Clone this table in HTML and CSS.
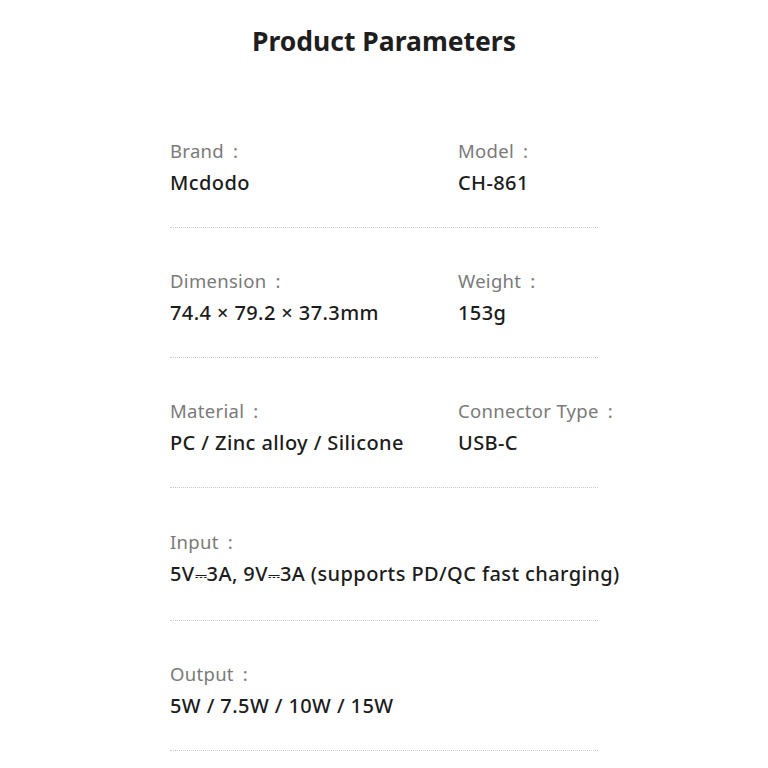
FILE: index.html
```html
<!DOCTYPE html>
<html lang="en">
<head>
<meta charset="utf-8">
<title>Product Parameters</title>
<link rel="stylesheet" href="styles.css">
</head>
<body>
<main class="page">
  <h1 class="title">Product Parameters</h1>
  <section class="params">
    <div class="row">
      <div class="cell"><div class="label">Brand<span class="colon">:</span></div><div class="value">Mcdodo</div></div>
      <div class="cell"><div class="label">Model<span class="colon">:</span></div><div class="value">CH-861</div></div>
    </div>
    <div class="row">
      <div class="cell"><div class="label">Dimension<span class="colon">:</span></div><div class="value">74.4 × 79.2 × 37.3mm</div></div>
      <div class="cell"><div class="label">Weight<span class="colon">:</span></div><div class="value">153g</div></div>
    </div>
    <div class="row">
      <div class="cell"><div class="label">Material<span class="colon">:</span></div><div class="value">PC / Zinc alloy / Silicone</div></div>
      <div class="cell"><div class="label">Connector Type<span class="colon">:</span></div><div class="value">USB-C</div></div>
    </div>
    <div class="row single">
      <div class="cell"><div class="label">Input<span class="colon">:</span></div><div class="value">5V<span class="dc">⎓</span>3A, 9V<span class="dc">⎓</span>3A (supports PD/QC fast charging)</div></div>
    </div>
    <div class="row single">
      <div class="cell"><div class="label">Output<span class="colon">:</span></div><div class="value">5W / 7.5W / 10W / 15W</div></div>
    </div>
  </section>
</main>
</body>
</html>
```
FILE: styles.css
```css
html, body {
  margin: 0;
  padding: 0;
  background: #ffffff;
}
body {
  font-family: "Noto Sans", sans-serif;
  color: #222222;
}
.page {
  width: 428px;
  margin: 0 auto;
  padding-top: 24px;
}
.title {
  margin: 0 0 39.5px 0;
  text-align: center;
  font-size: 26.5px;
  line-height: 34px;
  font-weight: 700;
  color: #1e1e1e;
  white-space: nowrap;
}
.params {
  display: flex;
  flex-direction: column;
}
.row {
  display: grid;
  grid-template-columns: 288px 1fr;
  padding: 41.25px 0 30px 0;
  border-bottom: 1px dotted #c8c8c8;
}
.row.single {
  grid-template-columns: 1fr;
}
.cell {
  display: flex;
  flex-direction: column;
  gap: 6px;
  white-space: nowrap;
}
.label {
  font-size: 18.5px;
  line-height: 24px;
  letter-spacing: 0.3px;
  color: #7a7a7a;
}
.colon {
  margin-left: 9px;
}
.value {
  font-size: 20px;
  line-height: 28px;
  font-weight: 500;
  letter-spacing: 0.4px;
  color: #1c1c1c;
}
.dc {
  font-family: "DejaVu Sans", sans-serif;
  font-size: 15px;
  letter-spacing: 0;
}
```
